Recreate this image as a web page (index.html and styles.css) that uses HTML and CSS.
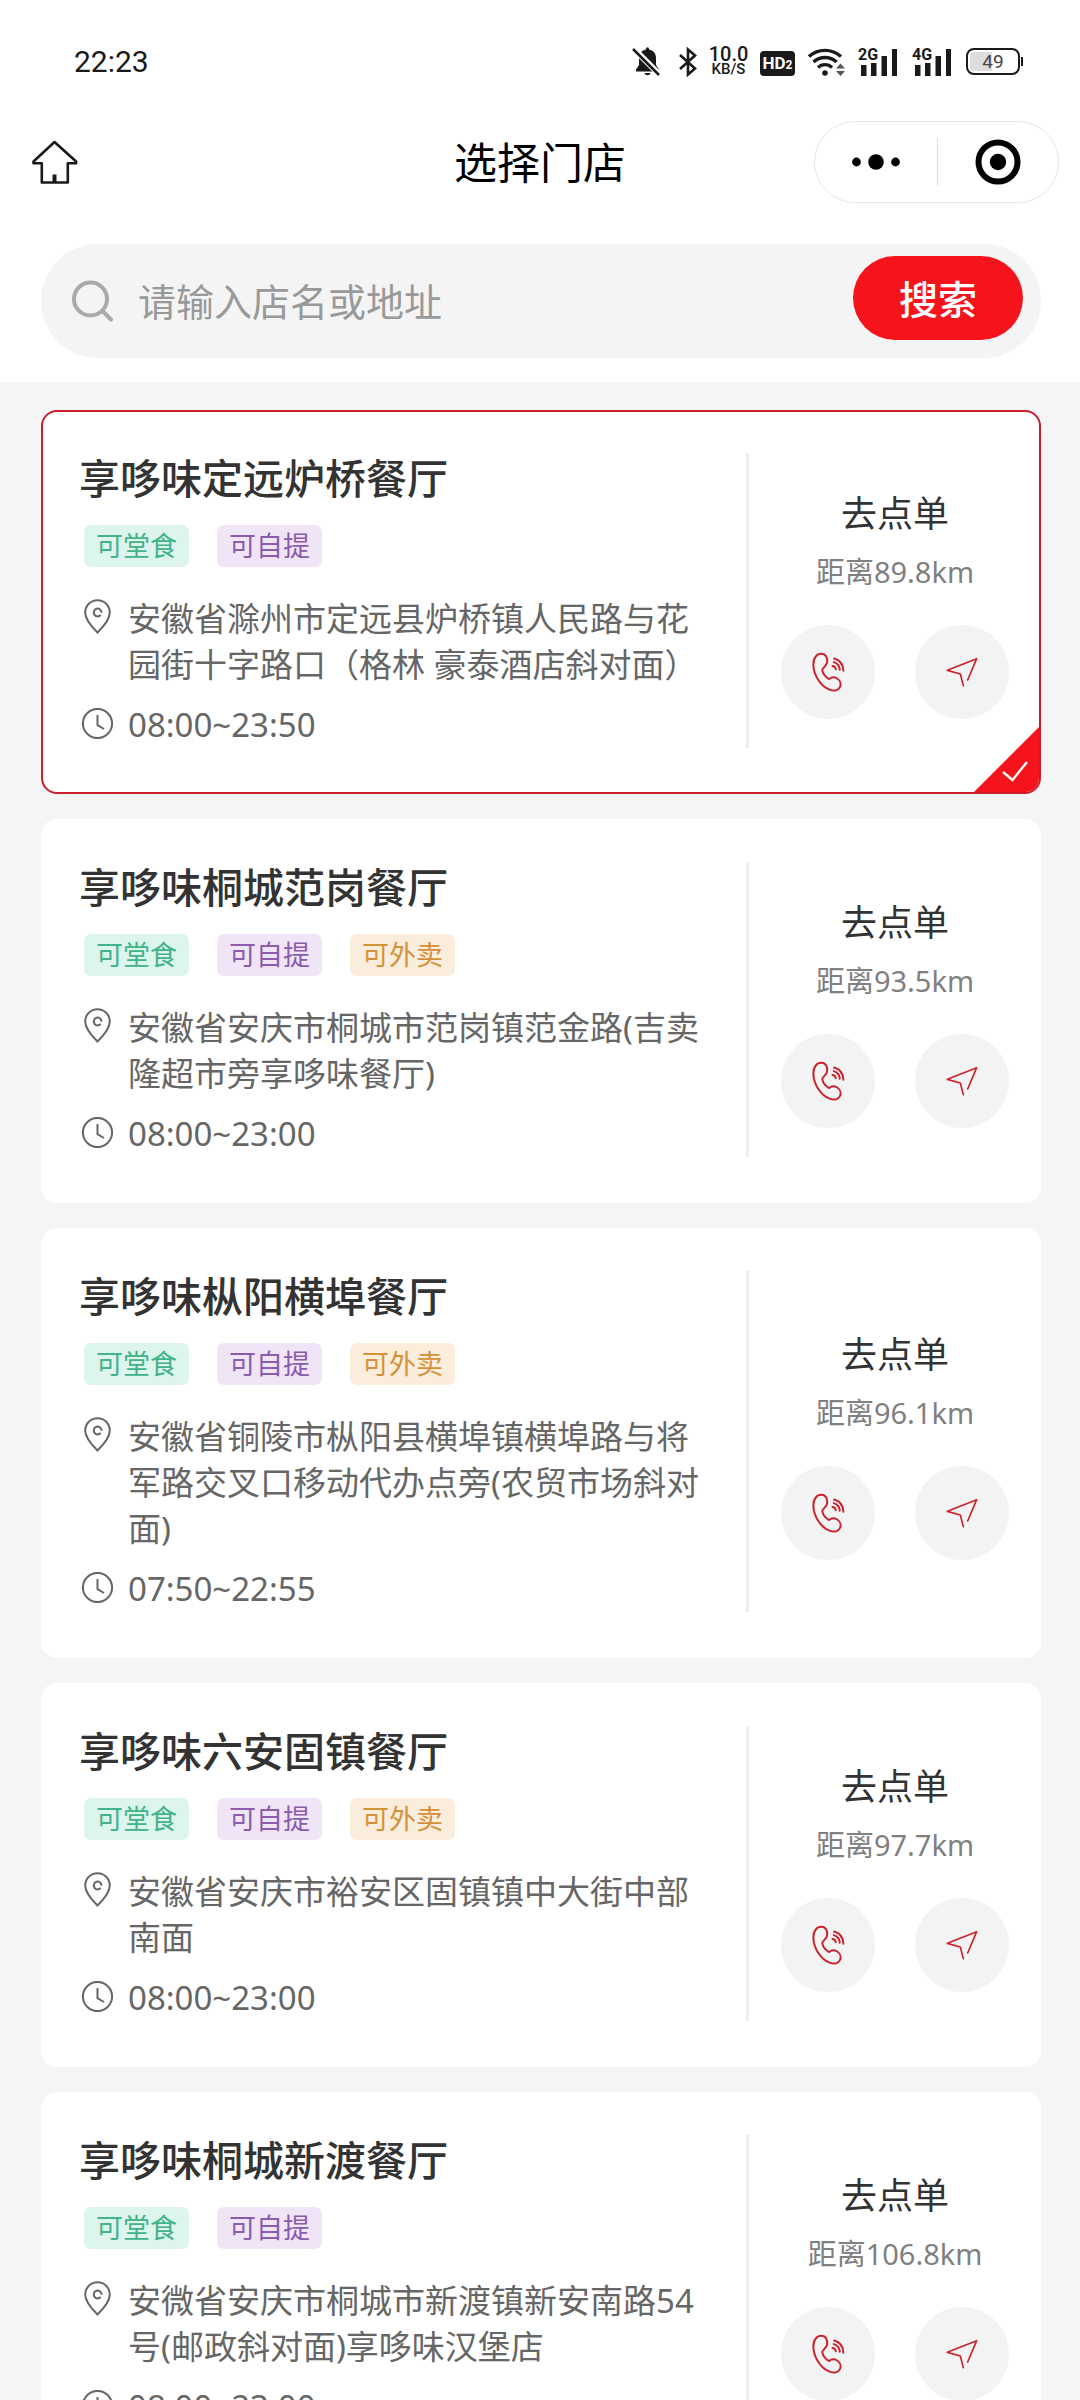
FILE: index.html
```html
<!DOCTYPE html>
<html lang="zh-CN">
<head>
<meta charset="utf-8">
<meta name="viewport" content="width=device-width, initial-scale=1">
<title>选择门店</title>
<link rel="stylesheet" href="styles.css">
</head>
<body>
<svg class="sprite" aria-hidden="true">
  <symbol id="pin" viewBox="0 0 31 36">
    <path d="M15.500 34.500C11 30 3.200 22.500 3.200 14.500a12.300 12.300 0 0 1 24.600 0C27.800 22.500 20 30 15.500 34.500Z"/>
    <path d="M18.600 17a3.900 3.900 0 1 1 .9-2.300"/>
  </symbol>
  <symbol id="clock" viewBox="0 0 31 31">
    <circle cx="15.500" cy="15.500" r="14.600"/>
    <path d="M15.500 7v10.200l6.500 3.800"/>
  </symbol>
  <symbol id="phone" viewBox="275 752 100 120">
    <path stroke-width="6" d="M279 790C279 768 290 757 303 757C318 757 322 770 321 782C320 796 306 798 306 806C308 820 322 832 327 833C333 828 342 826 350 831C360 837 364 848 360 857C355 868 342 870 330 866C300 856 280 820 279 790Z"/>
    <path stroke-width="6" d="M342 771Q369 778 370 808M341 782Q358 787 359 805M337 794Q347 796 347 804"/>
  </symbol>
  <symbol id="navigate" viewBox="679 767 96 90">
    <path stroke-width="5" d="M744 836L771 772L683 807L722 818L731 853"/>
  </symbol>
</svg>

<div class="app">
  <header class="top">
    <div class="status">
      <span class="status-time">22:23</span>
      <div class="status-icons">
        <svg width="34" height="30" viewBox="0 0 34 30">
          <path fill="#1a1a1a" d="M14 2.500v-.7a1.500 1.500 0 0 1 3 0v.7c5 1 7 4.500 7 8.500v7l3 4.500v2H4v-2L7 18v-7c0-4 2-7.500 7-8.500ZM12.500 26h6c-.5 3-5.500 3-6 0Z"/>
          <path stroke="#fff" stroke-width="6" d="M1 1l27 27"/>
          <path stroke="#1a1a1a" stroke-width="2.500" d="M1 2l26 26"/>
        </svg>
        <svg width="18" height="30" viewBox="0 0 18 30">
          <path fill="none" stroke="#1a1a1a" stroke-width="2.600" d="M1 8l15 13.500L9 27.500V2.500l7 6L1 22"/>
        </svg>
        <span class="speed"><b>10.0</b><span>KB/S</span></span>
        <span class="hd">HD<small>2</small></span>
        <svg width="37" height="30" viewBox="0 0 37 30">
          <g fill="none" stroke="#1a1a1a" stroke-width="3.400">
            <path d="M1 9.500a24 24 0 0 1 32 0M5.500 15a17 17 0 0 1 23 0M10 20.500a10 10 0 0 1 14 0"/>
          </g>
          <circle cx="17" cy="26" r="2.800" fill="#1a1a1a"/>
          <path fill="#555" d="M28 21.500l4.500-5 4.500 5zM28 24l4.500 5 4.500-5z"/>
        </svg>
        <span class="signal"><i>2G</i>
          <svg width="41" height="30" viewBox="0 0 41 30"><path fill="#1a1a1a" d="M3 18h5.500v11H3zM13 16h5.500v13H13zM23.500 9H29v20h-5.500zM34 2h5v27h-5z"/></svg>
        </span>
        <span class="signal"><i>4G</i>
          <svg width="41" height="30" viewBox="0 0 41 30"><path fill="#1a1a1a" d="M3 18h5.500v11H3zM13 16h5.500v13H13zM23.500 9H29v20h-5.500zM34 2h5v27h-5z"/></svg>
        </span>
        <span class="battery"><span>49</span></span>
      </div>
    </div>

    <nav class="nav">
      <button class="home" type="button" aria-label="首页">
        <svg width="46" height="44" viewBox="0 0 46 44">
          <path fill="none" stroke="#1a1a1a" stroke-width="2.600" stroke-linejoin="round" d="M22.500 2L1.500 21.500v1.700h8.300V42.500h26V23.200h8.300v-1.700Z"/>
          <path stroke="#1a1a1a" stroke-width="4" d="M22.500 34.500v8"/>
        </svg>
      </button>
      <h1>选择门店</h1>
      <div class="capsule">
        <button type="button" aria-label="更多">
          <svg width="50" height="16" viewBox="0 0 50 16"><circle cx="5.500" cy="8" r="4.400"/><circle cx="25" cy="8" r="7.800"/><circle cx="44.500" cy="8" r="4.400"/></svg>
        </button>
        <button type="button" aria-label="关闭">
          <svg width="46" height="46" viewBox="0 0 46 46"><circle cx="23" cy="23" r="19.500" fill="none" stroke="#000" stroke-width="6"/><circle cx="23" cy="23" r="8.200"/></svg>
        </button>
      </div>
    </nav>

    <form class="search" role="search">
      <svg width="42" height="42" viewBox="0 0 42 42" fill="none" stroke="#aaa" stroke-width="4" stroke-linecap="round">
        <circle cx="18.500" cy="19" r="16.500"/><path d="M30.500 31l8.500 8.500"/>
      </svg>
      <input type="text" placeholder="请输入店名或地址" aria-label="请输入店名或地址">
      <button type="submit">搜索</button>
    </form>
  </header>

  <main class="stores">
    <article class="store selected">
      <div class="info">
        <h2>享哆味定远炉桥餐厅</h2>
        <div class="tags"><span class="tag dine">可堂食</span><span class="tag pickup">可自提</span></div>
        <p class="row address"><svg class="pin"><use href="#pin"/></svg><span>安徽省滁州市定远县炉桥镇人民路与花园街十字路口（格林 豪泰酒店斜对面）</span></p>
        <p class="row hours"><svg class="clock"><use href="#clock"/></svg><span>08:00~23:50</span></p>
      </div>
      <div class="side">
        <button class="order" type="button">去点单</button>
        <p class="distance">距离89.8km</p>
        <div class="actions">
          <button type="button" aria-label="电话"><svg class="phone"><use href="#phone"/></svg></button>
          <button type="button" aria-label="导航"><svg class="navigate"><use href="#navigate"/></svg></button>
        </div>
      </div>
      <svg class="check" viewBox="0 0 67 67"><path fill="#f5141b" d="M67 0v67H0z"/><path fill="none" stroke="#fff" stroke-width="2.400" d="M30 46l9.500 8L54 36"/></svg>
    </article>

    <article class="store">
      <div class="info">
        <h2>享哆味桐城范岗餐厅</h2>
        <div class="tags"><span class="tag dine">可堂食</span><span class="tag pickup">可自提</span><span class="tag delivery">可外卖</span></div>
        <p class="row address"><svg class="pin"><use href="#pin"/></svg><span>安徽省安庆市桐城市范岗镇范金路(吉卖隆超市旁享哆味餐厅)</span></p>
        <p class="row hours"><svg class="clock"><use href="#clock"/></svg><span>08:00~23:00</span></p>
      </div>
      <div class="side">
        <button class="order" type="button">去点单</button>
        <p class="distance">距离93.5km</p>
        <div class="actions">
          <button type="button" aria-label="电话"><svg class="phone"><use href="#phone"/></svg></button>
          <button type="button" aria-label="导航"><svg class="navigate"><use href="#navigate"/></svg></button>
        </div>
      </div>
    </article>

    <article class="store">
      <div class="info">
        <h2>享哆味枞阳横埠餐厅</h2>
        <div class="tags"><span class="tag dine">可堂食</span><span class="tag pickup">可自提</span><span class="tag delivery">可外卖</span></div>
        <p class="row address"><svg class="pin"><use href="#pin"/></svg><span>安徽省铜陵市枞阳县横埠镇横埠路与将军路交叉口移动代办点旁(农贸市场斜对面)</span></p>
        <p class="row hours"><svg class="clock"><use href="#clock"/></svg><span>07:50~22:55</span></p>
      </div>
      <div class="side">
        <button class="order" type="button">去点单</button>
        <p class="distance">距离96.1km</p>
        <div class="actions">
          <button type="button" aria-label="电话"><svg class="phone"><use href="#phone"/></svg></button>
          <button type="button" aria-label="导航"><svg class="navigate"><use href="#navigate"/></svg></button>
        </div>
      </div>
    </article>

    <article class="store">
      <div class="info">
        <h2>享哆味六安固镇餐厅</h2>
        <div class="tags"><span class="tag dine">可堂食</span><span class="tag pickup">可自提</span><span class="tag delivery">可外卖</span></div>
        <p class="row address"><svg class="pin"><use href="#pin"/></svg><span>安徽省安庆市裕安区固镇镇中大街中部南面</span></p>
        <p class="row hours"><svg class="clock"><use href="#clock"/></svg><span>08:00~23:00</span></p>
      </div>
      <div class="side">
        <button class="order" type="button">去点单</button>
        <p class="distance">距离97.7km</p>
        <div class="actions">
          <button type="button" aria-label="电话"><svg class="phone"><use href="#phone"/></svg></button>
          <button type="button" aria-label="导航"><svg class="navigate"><use href="#navigate"/></svg></button>
        </div>
      </div>
    </article>

    <article class="store">
      <div class="info">
        <h2>享哆味桐城新渡餐厅</h2>
        <div class="tags"><span class="tag dine">可堂食</span><span class="tag pickup">可自提</span></div>
        <p class="row address"><svg class="pin"><use href="#pin"/></svg><span>安微省安庆市桐城市新渡镇新安南路54号(邮政斜对面)享哆味汉堡店</span></p>
        <p class="row hours"><svg class="clock"><use href="#clock"/></svg><span>08:00~23:00</span></p>
      </div>
      <div class="side">
        <button class="order" type="button">去点单</button>
        <p class="distance">距离106.8km</p>
        <div class="actions">
          <button type="button" aria-label="电话"><svg class="phone"><use href="#phone"/></svg></button>
          <button type="button" aria-label="导航"><svg class="navigate"><use href="#navigate"/></svg></button>
        </div>
      </div>
    </article>
  </main>
</div>
</body>
</html>
```
FILE: styles.css
```css
* { box-sizing: border-box; }

body {
  margin: 0;
  background: #f5f5f5;
  color: #333;
  font-family: "Noto Sans", "Noto Sans CJK SC", sans-serif;
}

h1, h2, p { margin: 0; }

button {
  padding: 0;
  border: 0;
  background: none;
  color: inherit;
  font: inherit;
  cursor: pointer;
}

svg { display: block; flex: none; }

.sprite { position: absolute; width: 0; height: 0; }

.app {
  display: flex;
  flex-direction: column;
  height: 100vh;
}

.top {
  flex: none;
  padding-bottom: 24px;
  background: #fff;
}

/* Status bar */
.status {
  display: flex;
  align-items: center;
  justify-content: space-between;
  height: 121px;
  padding: 2px 57px 0 74px;
  color: #1a1a1a;
}

.status-time { font: 400 30px/36px Roboto, sans-serif; }

.status-icons {
  display: flex;
  align-items: center;
  gap: 13px;
}

.speed {
  display: flex;
  flex-direction: column;
  align-items: center;
  width: 37px;
  font: 500 15px/15px Roboto, sans-serif;
}

.speed b { font-size: 20px; font-weight: 500; line-height: 16px; }

.hd {
  display: flex;
  align-items: baseline;
  justify-content: center;
  width: 35px;
  height: 25px;
  margin-top: 4px;
  border-radius: 4px;
  background: #1a1a1a;
  color: #fff;
  font: 700 17px/25px Roboto, sans-serif;
}

.hd small { font-size: 12px; }

.signal { position: relative; width: 41px; }

.signal i {
  position: absolute;
  left: 0;
  top: -1px;
  background: #fff;
  font: 700 16px/17px Roboto, sans-serif;
}

.battery {
  position: relative;
  width: 54px;
  height: 27px;
  margin-right: 3px;
  padding: 2px;
  border: 2px solid #1a1a1a;
  border-radius: 8px;
  background: linear-gradient(90deg, #ddd 48%, #fff 48%) content-box;
  color: #444;
  font: 400 19px/19px Roboto, sans-serif;
  text-align: center;
}

.battery::after {
  content: "";
  position: absolute;
  top: 7px;
  right: -5px;
  width: 2px;
  height: 9px;
  background: #1a1a1a;
}

/* Title bar */
.nav {
  display: grid;
  grid-template-columns: 1fr auto 1fr;
  align-items: center;
  padding: 0 21px;
}

.home { justify-self: start; padding-left: 11px; }

.nav h1 {
  padding-top: 2px;
  color: #000;
  font-size: 43px;
  font-weight: 400;
  line-height: 60px;
}

.capsule {
  display: grid;
  grid-template-columns: 1fr 1fr;
  justify-self: end;
  width: 245px;
  height: 82px;
  border: 1px solid #e5e5e5;
  border-radius: 41px;
}

.capsule button {
  display: grid;
  place-items: center;
  margin: 16px 0;
}

.capsule button + button { border-left: 1px solid #ddd; }

/* Search */
.search {
  display: flex;
  align-items: center;
  height: 114px;
  margin: 41px 39px 0 41px;
  padding: 0 18px 0 31px;
  border-radius: 57px;
  background: #f4f4f4;
}

.search input {
  flex: 1;
  min-width: 0;
  margin-left: 24px;
  padding: 0;
  border: 0;
  outline: 0;
  background: none;
  color: #333;
  font: 400 38px/56px "Noto Sans", "Noto Sans CJK SC", sans-serif;
}

.search input::placeholder { color: #999; opacity: 1; }

.search button {
  width: 170px;
  height: 84px;
  margin-bottom: 6px;
  padding-bottom: 2px;
  border-radius: 42px;
  background: #f5141b;
  color: #fff;
  font-size: 39px;
  font-weight: 500;
}

/* Store list */
.stores {
  display: flex;
  flex: 1;
  flex-direction: column;
  gap: 25px;
  min-height: 0;
  padding: 28px 39px 28px 41px;
  overflow-y: auto;
  scrollbar-width: none;
}

.store {
  position: relative;
  display: grid;
  flex: none;
  grid-template-columns: 1fr 293px;
  padding: 41px 0 44px 36px;
  border: 2px solid #fff;
  border-radius: 16px;
  background: #fff;
  overflow: hidden;
}

.store.selected { border-color: #cb1f2b; }

.store h2 {
  font-size: 41px;
  font-weight: 500;
  line-height: 50px;
}

.tags {
  display: flex;
  gap: 28px;
  margin-top: 22px;
  padding-left: 5px;
}

.tag {
  padding: 0 12px;
  border-radius: 7px;
  font-size: 27px;
  line-height: 42px;
}

.dine { background: #ddf5ed; color: #41b38a; }
.pickup { background: #f0e5f7; color: #8a5cab; }
.delivery { background: #faeddb; color: #d3913a; }

.row {
  display: flex;
  gap: 15px;
  padding: 0 36px 0 3px;
  color: #666;
  font-size: 33px;
  line-height: 46px;
}

.row svg { fill: none; stroke: #666; stroke-width: 2; }

.address { margin-top: 29px; }
.hours { margin-top: 14px; }

.pin { width: 31px; height: 36px; margin-top: 2px; }
.clock { width: 31px; height: 31px; margin-top: 6px; }

.side {
  display: flex;
  flex-direction: column;
  align-items: center;
  justify-content: center;
  padding: 4px 0 0 2px;
  border-left: 3px solid #eee;
}

.order { font-size: 36px; line-height: 54px; }

.distance {
  margin-top: 12px;
  color: #808080;
  font-size: 29px;
  line-height: 38px;
}

.actions {
  display: flex;
  gap: 40px;
  margin-top: 34px;
}

.actions button {
  display: grid;
  place-items: center;
  width: 94px;
  height: 94px;
  border-radius: 50%;
  background: #f3f3f3;
}

.actions svg {
  fill: none;
  stroke: #c9232d;
  stroke-linejoin: round;
  stroke-linecap: round;
}

.phone { width: 33px; height: 40px; }
.navigate { width: 32px; height: 30px; }

.check {
  position: absolute;
  right: -1px;
  bottom: -1px;
  width: 67px;
  height: 67px;
}
```
